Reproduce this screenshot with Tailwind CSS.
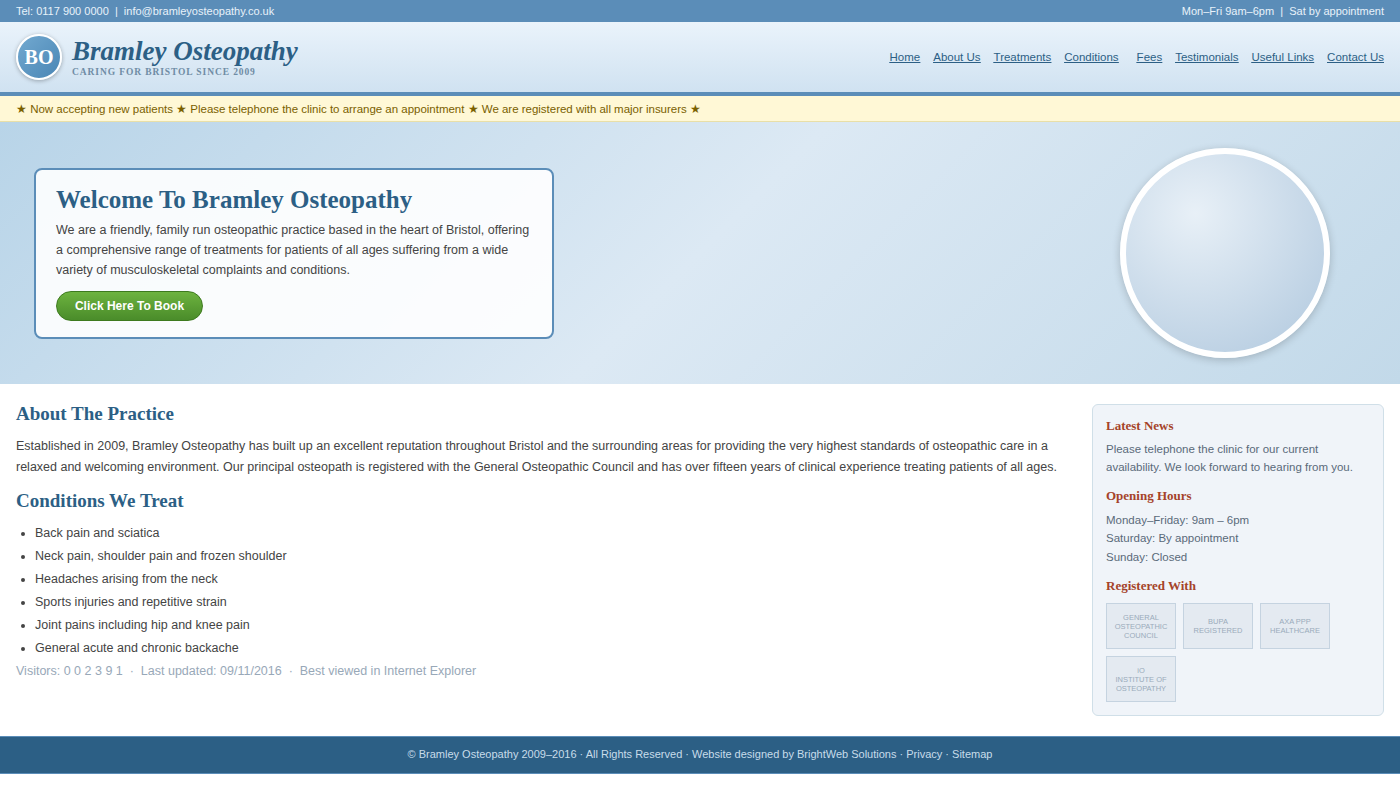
<!DOCTYPE html>
<html lang="en">
<head>
<meta charset="utf-8">
<title>Bramley Osteopathy</title>
<script src="https://cdn.jsdelivr.net/npm/@tailwindcss/browser@4"></script>
</head>
<body class="bg-white font-['Liberation_Sans',Arial,sans-serif] text-[12.5px] text-[#333333]">
<div class="h-[22px] bg-[#5b8db8] px-4 flex items-center justify-between text-[11px] text-[#e8f2fa]">
  <span>Tel: 0117 900 0000 &nbsp;|&nbsp; info@bramleyosteopathy.co.uk</span>
  <span>Mon–Fri 9am–6pm &nbsp;|&nbsp; Sat by appointment</span>
</div>
<header class="h-[74px] border-b-4 border-[#5b8db8] bg-gradient-to-b from-[#eaf3fb] to-[#d0e2f1] px-4 flex items-center justify-between">
  <div class="flex items-center gap-[10px]">
    <div class="w-[46px] h-[46px] rounded-full border-2 border-white bg-gradient-to-br from-[#72a9d0] to-[#4a86b5] shadow-[0_1px_4px_rgba(0,0,0,0.3)] flex items-center justify-center font-['Liberation_Serif',serif] font-bold text-[20px] text-white">BO</div>
    <div class="pt-[1px]">
      <div class="font-['Liberation_Serif',serif] font-bold italic text-[27px] leading-[28px] mb-px text-[#2c5f85]">Bramley Osteopathy</div>
      <div class="font-['Liberation_Serif',serif] font-bold text-[9.5px] leading-[12px] tracking-[0.9px] text-[#6f8ca5]">CARING FOR BRISTOL SINCE 2009</div>
    </div>
  </div>
  <nav class="flex gap-[13px] pt-px text-[11.5px] text-[#2c5f85] underline">
    <a href="#">Home</a><a href="#">About Us</a><a href="#">Treatments</a><a href="#" class="mr-[5px]">Conditions</a><a href="#">Fees</a><a href="#">Testimonials</a><a href="#">Useful Links</a><a href="#">Contact Us</a>
  </nav>
</header>
<div class="h-[26px] bg-[#fff8d6] border-b border-[#e8dfa8] px-4 pt-[2px] flex items-center text-[11.5px] tracking-[-0.015px] text-[#7a6000]">★ Now accepting new patients ★ Please telephone the clinic to arrange an appointment ★ We are registered with all major insurers ★</div>
<section class="h-[262px] bg-[linear-gradient(135deg,#b8d4e8_0%,#dce9f4_50%,#c2d9e9_100%)] pl-[34px] pr-[70px] flex items-center justify-between">
  <div class="w-[520px] h-[171px] bg-white/90 border-2 border-[#5b8db8] rounded-lg px-5 pt-[15px]">
    <h1 class="font-['Liberation_Serif',serif] font-bold text-[25px] leading-[30px] text-[#2c5f85] mb-[5px]">Welcome To Bramley Osteopathy</h1>
    <p class="text-[12.5px] leading-[20px] text-[#444444] mb-[11px]">We are a friendly, family run osteopathic practice based in the heart of Bristol, offering a comprehensive range of treatments for patients of all ages suffering from a wide variety of musculoskeletal complaints and conditions.</p>
    <a href="#" class="inline-flex items-center justify-center w-[147px] h-[30px] rounded-[15px] border border-[#3d7a1e] bg-gradient-to-b from-[#6db33f] to-[#4a8c2a] font-bold text-[12px] text-white">Click Here To Book</a>
  </div>
  <div class="w-[210px] h-[210px] rounded-full border-[6px] border-white bg-[radial-gradient(circle_at_35%_30%,#e8f0f7,#b0c8de)] shadow-[0_2px_8px_rgba(0,0,0,0.2)]"></div>
</section>
<main class="flex gap-5 px-4 py-5 h-[352px]">
  <div class="flex-1">
    <h2 class="font-['Liberation_Serif',serif] font-bold text-[19px] leading-[20px] text-[#2c5f85] mb-[12px]">About The Practice</h2>
    <p class="text-[12.5px] leading-[21.25px] text-[#444444] mb-[12px]">Established in 2009, Bramley Osteopathy has built up an excellent reputation throughout Bristol and the surrounding areas for providing the very highest standards of osteopathic care in a relaxed and welcoming environment. Our principal osteopath is registered with the General Osteopathic Council and has over fifteen years of clinical experience treating patients of all ages.</p>
    <h2 class="font-['Liberation_Serif',serif] font-bold text-[19px] leading-[20px] text-[#2c5f85] mb-[11px]">Conditions We Treat</h2>
    <ul class="list-disc pl-[19px] text-[12.5px] leading-[23.1px] text-[#444444]">
      <li>Back pain and sciatica</li>
      <li>Neck pain, shoulder pain and frozen shoulder</li>
      <li>Headaches arising from the neck</li>
      <li>Sports injuries and repetitive strain</li>
      <li>Joint pains including hip and knee pain</li>
      <li>General acute and chronic backache</li>
    </ul>
    <p class="text-[12.5px] leading-[23px] text-[#98a8b8]">Visitors: 0 0 2 3 9 1 &nbsp;·&nbsp; Last updated: 09/11/2016 &nbsp;·&nbsp; Best viewed in Internet Explorer</p>
  </div>
  <aside class="w-[292px] h-[312px] bg-[#f0f4f9] border border-[#d0dfe8] rounded-md p-[13px] pt-[12px]">
    <h3 class="font-['Liberation_Serif',serif] font-bold text-[13px] leading-[18px] text-[#a5432a] mb-[5px]">Latest News</h3>
    <p class="text-[11.5px] leading-[18.4px] text-[#5a6a7a] mb-[10.5px]">Please telephone the clinic for our current availability. We look forward to hearing from you.</p>
    <h3 class="font-['Liberation_Serif',serif] font-bold text-[13px] leading-[18px] text-[#a5432a] mb-[5.5px]">Opening Hours</h3>
    <p class="text-[11.5px] leading-[18.4px] text-[#5a6a7a] mb-[11px]">Monday–Friday: 9am – 6pm<br>Saturday: By appointment<br>Sunday: Closed</p>
    <h3 class="font-['Liberation_Serif',serif] font-bold text-[13px] leading-[18px] text-[#a5432a] mb-[8px]">Registered With</h3>
    <div class="flex flex-wrap gap-[7px]">
      <div class="w-[70px] h-[46px] bg-[#e4eaf1] border border-[#c5d3e0] flex items-center justify-center text-center text-[7.5px] leading-[9px] text-[#9aaabb]">GENERAL<br>OSTEOPATHIC<br>COUNCIL</div>
      <div class="w-[70px] h-[46px] bg-[#e4eaf1] border border-[#c5d3e0] flex items-center justify-center text-center text-[7.5px] leading-[9px] text-[#9aaabb]">BUPA<br>REGISTERED</div>
      <div class="w-[70px] h-[46px] bg-[#e4eaf1] border border-[#c5d3e0] flex items-center justify-center text-center text-[7.5px] leading-[9px] text-[#9aaabb]">AXA PPP<br>HEALTHCARE</div>
      <div class="w-[70px] h-[46px] bg-[#e4eaf1] border border-[#c5d3e0] flex items-center justify-center text-center text-[7.5px] leading-[9px] text-[#9aaabb]">iO<br>INSTITUTE OF<br>OSTEOPATHY</div>
    </div>
  </aside>
</main>
<footer class="h-[38px] bg-[#2c5f85] border-t border-b border-[#5b8db8] pb-[2px] flex items-center justify-center text-[11px] text-[#c8dcea]">© Bramley Osteopathy 2009–2016 · All Rights Reserved · Website designed by BrightWeb Solutions · Privacy · Sitemap</footer>
</body>
</html>
